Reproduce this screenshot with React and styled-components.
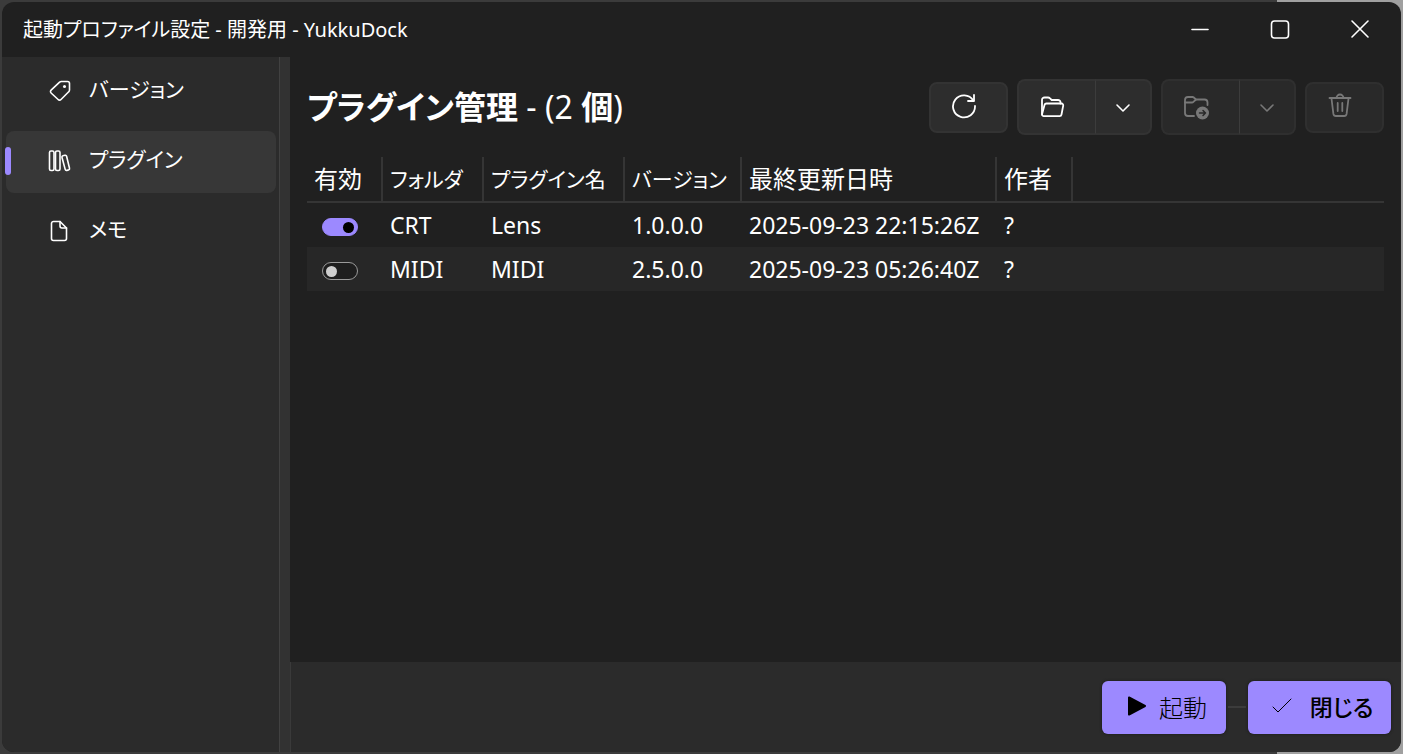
import React, { useState } from "react";
import styled, { createGlobalStyle, css } from "styled-components";

const GlobalStyle = createGlobalStyle`
  *, *::before, *::after { box-sizing: border-box; }
  html, body { margin: 0; height: 100%; }
  #root { height: 100%; }
  body {
    background: linear-gradient(90deg, #3b3b3b 91%, #a0a0a0 91%);
    color: #fff;
    font-family: "Noto Sans", "Noto Sans CJK JP", sans-serif;
    font-feature-settings: "palt";
    font-size: 24px;
  }
  button { font: inherit; color: inherit; font-feature-settings: inherit; }
`;

const Desktop = styled.div`
  display: flex;
  min-height: 100%;
  padding: 2px;
`;

const Window = styled.div`
  flex: 1;
  display: flex;
  flex-direction: column;
  min-width: 0;
  background: #202020;
  border-radius: 12px;
  overflow: hidden;
`;

const TitleBar = styled.header`
  display: flex;
  align-items: center;
  justify-content: space-between;
  height: 55px;
  padding-left: 21px;
`;

const WindowTitle = styled.span`
  font-size: 20px;
  line-height: 28px;
`;

const CaptionButtons = styled.div`
  display: flex;
  align-self: stretch;
`;

const CaptionButton = styled.button`
  display: grid;
  place-items: center;
  width: 80px;
  border: 0;
  padding: 0 2px 2px 0;
  background: none;
`;

const Body = styled.div`
  flex: 1;
  display: flex;
`;

const Sidebar = styled.nav`
  display: flex;
  flex-direction: column;
  gap: 8px;
  width: 277px;
  padding: 4px 3px 4px 4px;
  background: #2b2b2b;
`;

const NavItem = styled.a`
  position: relative;
  display: flex;
  align-items: center;
  gap: 17px;
  height: 62px;
  padding: 0 0 2px 42px;
  border-radius: 8px;
  color: #fff;
  text-decoration: none;
  ${({ $active }) => $active && css`
    background: #373737;
    &::before {
      content: "";
      position: absolute;
      left: -1px;
      width: 6px;
      height: 28px;
      border-radius: 3px;
      background: #9c89ff;
    }
  `}
`;

const NavLabel = styled.span`
  padding-bottom: 4px;
  font-size: 21px;
  line-height: 32px;
`;

const Splitter = styled.div`
  width: 11px;
  background: #323232;
  border-left: 1px solid #414141;
`;

const Main = styled.div`
  flex: 1;
  display: flex;
  flex-direction: column;
  min-width: 0;
`;

const Content = styled.main`
  flex: 1;
  padding: 20px 17px;
`;

const PageHeader = styled.div`
  display: flex;
  align-items: center;
  justify-content: space-between;
  height: 60px;
  margin-bottom: 20px;
`;

const PageTitle = styled.h1`
  margin: 0;
  font-size: 32px;
  line-height: 40px;
  font-weight: 700;
`;

const Light = styled.span`
  font-weight: 400;
`;

const Toolbar = styled.div`
  display: flex;
  align-items: center;
  gap: 9px;
`;

const buttonSurface = css`
  border: 2px solid ${({ disabled }) => (disabled ? "#2f2f2f" : "#333")};
  border-radius: 8px;
  background: ${({ disabled }) => (disabled ? "#292929" : "#2d2d2d")};
  color: ${({ disabled }) => (disabled ? "#787878" : "#fff")};
`;

const ToolButton = styled.button`
  ${buttonSurface}
  display: grid;
  place-items: center;
  width: 79px;
  height: 51px;
  padding: 0 10px 2px 0;
`;

const SplitButton = styled.div`
  display: flex;
  height: 56px;
`;

const SplitMain = styled.button`
  ${buttonSurface}
  display: grid;
  place-items: center;
  width: 78px;
  padding: 0 10px 0 0;
  border-right: 0;
  border-radius: 8px 0 0 8px;
`;

const SplitMenu = styled.button`
  ${buttonSurface}
  display: grid;
  place-items: center;
  width: 57px;
  padding: 0;
  border-left: 1px solid #3c3c3c;
  border-radius: 0 8px 8px 0;
`;

const PluginTable = styled.table`
  width: 100%;
  table-layout: fixed;
  border-collapse: separate;
  border-spacing: 0;
`;

const HeadCell = styled.th`
  height: 46px;
  padding: 0 0 0 7px;
  border-bottom: 2px solid #353535;
  border-right: ${({ $last }) => ($last ? "0" : "2px solid #353535")};
  font-size: ${({ $kana }) => ($kana ? "21px" : "24px")};
  font-weight: 400;
  line-height: 32px;
  text-align: left;
  white-space: nowrap;
`;

const Row = styled.tr`
  background: ${({ $alt }) => ($alt ? "#272727" : "transparent")};
`;

const Cell = styled.td`
  height: 44px;
  padding: 0 0 0 7px;
  font-size: 23px;
  line-height: 32px;
  white-space: nowrap;
`;

const Toggle = styled.input`
  appearance: none;
  display: flex;
  align-items: center;
  width: 36px;
  height: 18px;
  margin: 4px 0 0 8px;
  padding: 0 3px;
  border: 1px solid #9a9a9a;
  border-radius: 9px;
  background: #1e1e1e;
  &::before {
    content: "";
    width: 11px;
    height: 11px;
    border-radius: 50%;
    background: #cfcfcf;
  }
  &:checked {
    justify-content: flex-end;
    border-color: #9c89ff;
    background: #9c89ff;
  }
  &:checked::before { background: #000; }
`;

const Footer = styled.footer`
  display: flex;
  align-items: center;
  justify-content: flex-end;
  height: 90px;
  padding-right: 10px;
  border-left: 1px solid #3a3a3a;
  background: #2b2b2b;
`;

const ActionButton = styled.button`
  display: flex;
  align-items: center;
  justify-content: center;
  gap: ${({ $wide }) => ($wide ? "18px" : "12px")};
  width: ${({ $wide }) => ($wide ? "143px" : "124px")};
  height: 53px;
  padding: 0 0 2px 6px;
  border: 0;
  border-radius: 6px;
  background: #9c89ff;
  box-shadow: 0 0 2px 1px #222;
  color: #000;
  font-size: ${({ $wide }) => ($wide ? "23px" : "24px")};
  font-weight: ${({ $wide }) => ($wide ? 500 : 300)};
`;

const Connector = styled.span`
  width: 18px;
  height: 2px;
  margin: 0 2px;
  background: #3c3c3c;
`;

const Icon = ({ size = 26, stroke = 2, children }) => (
  <svg width={size} height={size} viewBox={`0 0 ${size} ${size}`} fill="none" stroke="currentColor"
    strokeWidth={stroke} strokeLinecap="round" strokeLinejoin="round" aria-hidden="true">
    {children}
  </svg>
);

const TagIcon = () => (
  <Icon size={24} stroke={1.6}>
    <path d="M13.500 2.500h6a2 2 0 0 1 2 2v6.500a2.500 2.500 0 0 1-.8 1.800l-7.700 7.700a2 2 0 0 1-2.900 0l-7-6.500a2 2 0 0 1 0-2.900l8.500-7.900a2.500 2.500 0 0 1 1.900-.7z" />
    <circle cx="16.500" cy="7.500" r="1.500" fill="currentColor" stroke="none" />
  </Icon>
);

const LibraryIcon = () => (
  <Icon size={24} stroke={1.6}>
    <rect x="1.500" y="2" width="4.500" height="19.500" rx="1.500" />
    <rect x="7.500" y="2" width="4.500" height="19.500" rx="1.500" />
    <path d="M14.900 6.800l2-.5a1.400 1.400 0 0 1 1.700 1l2.900 12a1.400 1.400 0 0 1-1 1.700l-1.600.4a1.400 1.400 0 0 1-1.700-1l-3.200-11.900a1.400 1.400 0 0 1 .9-1.700z" />
  </Icon>
);

const DocumentIcon = () => (
  <Icon size={24} stroke={1.6}>
    <path d="M5.500 2.500h6.500l6.500 6.500v10.500a2 2 0 0 1-2 2h-11a2 2 0 0 1-2-2V4.500a2 2 0 0 1 2-2z" />
    <path d="M12 2.500V7a2 2 0 0 0 2 2h4.500" />
  </Icon>
);

const RefreshIcon = () => (
  <Icon stroke={1.8}>
    <path d="M22.300 7.500a11 11 0 1 0 1.700 5.500" />
    <path d="M23 2v6H17" />
  </Icon>
);

const FolderOpenIcon = () => (
  <Icon stroke={1.8}>
    <path d="M3 20.500V6a2.500 2.500 0 0 1 2.500-2.500h3.500a3 3 0 0 1 2 .8L12.700 6h6.300A2.500 2.500 0 0 1 21.500 8.500V9.500" />
    <path d="M7.500 9.500h15a1.800 1.800 0 0 1 1.700 2.200l-1.700 8.800a2 2 0 0 1-2 1.700H4.800a1.800 1.800 0 0 1-1.700-2.200L5.500 11.100A2 2 0 0 1 7.500 9.500z" />
  </Icon>
);

const FolderMoveIcon = () => (
  <Icon size={28} stroke={1.8}>
    <path d="M12 23H6a3 3 0 0 1-3-3V7a3 3 0 0 1 3-3h4.500a2 2 0 0 1 1.300.5L14 6.500h8.500a3 3 0 0 1 3 3V12" />
    <path d="M3 9.500h7a2 2 0 0 0 1.400-.6L14 6.500" />
    <circle cx="20.500" cy="20" r="6.500" fill="currentColor" stroke="none" />
    <path d="M17.500 20h6M21 17.500l2.500 2.500L21 22.500" stroke="#292929" strokeWidth="1.500" />
  </Icon>
);

const TrashIcon = () => (
  <Icon stroke={1.8}>
    <path d="M2.500 5h21M9.500 5a3.500 3.500 0 0 1 7 0M4.500 5.500l1.900 15.400A2.500 2.500 0 0 0 8.900 23h8.200a2.500 2.500 0 0 0 2.500-2.100L21.500 5.500M10.700 10v8M15.300 10v8" />
  </Icon>
);

const ChevronIcon = () => (
  <Icon size={16} stroke={1.6}>
    <path d="M2 6l6 6 6-6" />
  </Icon>
);

const plugins = [
  { enabled: true, folder: "CRT", name: "Lens", version: "1.0.0.0", updated: "2025-09-23 22:15:26Z", author: "?" },
  { enabled: false, folder: "MIDI", name: "MIDI", version: "2.5.0.0", updated: "2025-09-23 05:26:40Z", author: "?" },
];

const columns = [
  { label: "有効", width: 76 },
  { label: "フォルダ", width: 101, kana: true },
  { label: "プラグイン名", width: 141, kana: true },
  { label: "バージョン", width: 117, kana: true },
  { label: "最終更新日時", width: 255 },
  { label: "作者", width: 76 },
];

const navItems = [
  { label: "バージョン", icon: <TagIcon /> },
  { label: "プラグイン", icon: <LibraryIcon />, active: true },
  { label: "メモ", icon: <DocumentIcon /> },
];

const PluginRow = ({ plugin, alt }) => {
  const [enabled, setEnabled] = useState(plugin.enabled);
  return (
    <Row $alt={alt}>
      <Cell>
        <Toggle type="checkbox" role="switch" aria-label={plugin.name} checked={enabled}
          onChange={(e) => setEnabled(e.target.checked)} />
      </Cell>
      <Cell>{plugin.folder}</Cell>
      <Cell>{plugin.name}</Cell>
      <Cell>{plugin.version}</Cell>
      <Cell>{plugin.updated}</Cell>
      <Cell>{plugin.author}</Cell>
      <Cell />
    </Row>
  );
};

export default function App() {
  return (
    <Desktop lang="ja">
      <GlobalStyle />
      <Window>
        <TitleBar>
          <WindowTitle>起動プロファイル設定 - 開発用 - YukkuDock</WindowTitle>
          <CaptionButtons>
            <CaptionButton aria-label="最小化">
              <Icon size={20} stroke={1.6}><path d="M2 10.500h16" /></Icon>
            </CaptionButton>
            <CaptionButton aria-label="最大化">
              <Icon size={20} stroke={1.6}><rect x="1.500" y="2" width="17" height="17" rx="3" /></Icon>
            </CaptionButton>
            <CaptionButton aria-label="閉じる">
              <Icon size={20} stroke={1.6}><path d="M2 2l16 16M18 2L2 18" /></Icon>
            </CaptionButton>
          </CaptionButtons>
        </TitleBar>
        <Body>
          <Sidebar>
            {navItems.map((item) => (
              <NavItem key={item.label} href="#" $active={item.active}>
                {item.icon}
                <NavLabel>{item.label}</NavLabel>
              </NavItem>
            ))}
          </Sidebar>
          <Splitter />
          <Main>
            <Content>
              <PageHeader>
                <PageTitle>プラグイン管理 <Light>- (2</Light> 個<Light>)</Light></PageTitle>
                <Toolbar>
                  <ToolButton aria-label="更新"><RefreshIcon /></ToolButton>
                  <SplitButton>
                    <SplitMain aria-label="フォルダを開く"><FolderOpenIcon /></SplitMain>
                    <SplitMenu aria-label="開くメニュー"><ChevronIcon /></SplitMenu>
                  </SplitButton>
                  <SplitButton>
                    <SplitMain disabled aria-label="フォルダへ移動"><FolderMoveIcon /></SplitMain>
                    <SplitMenu disabled aria-label="移動メニュー"><ChevronIcon /></SplitMenu>
                  </SplitButton>
                  <ToolButton disabled aria-label="削除"><TrashIcon /></ToolButton>
                </Toolbar>
              </PageHeader>
              <PluginTable>
                <colgroup>
                  {columns.map((c) => <col key={c.label} width={c.width} />)}
                  <col />
                </colgroup>
                <thead>
                  <tr>
                    {columns.map((c) => <HeadCell key={c.label} scope="col" $kana={c.kana}>{c.label}</HeadCell>)}
                    <HeadCell as="td" $last />
                  </tr>
                </thead>
                <tbody>
                  {plugins.map((p, i) => <PluginRow key={p.folder} plugin={p} alt={i % 2 === 1} />)}
                </tbody>
              </PluginTable>
            </Content>
            <Footer>
              <ActionButton>
                <svg width="20" height="20" viewBox="0 0 20 20" aria-hidden="true">
                  <path d="M2 1.500L18 10 2 18.500z" fill="currentColor" stroke="currentColor" strokeWidth="2" strokeLinejoin="round" />
                </svg>
                起動
              </ActionButton>
              <Connector />
              <ActionButton $wide>
                <Icon size={20} stroke={1}><path d="M1 11l5 5L19 3" /></Icon>
                閉じる
              </ActionButton>
            </Footer>
          </Main>
        </Body>
      </Window>
    </Desktop>
  );
}
